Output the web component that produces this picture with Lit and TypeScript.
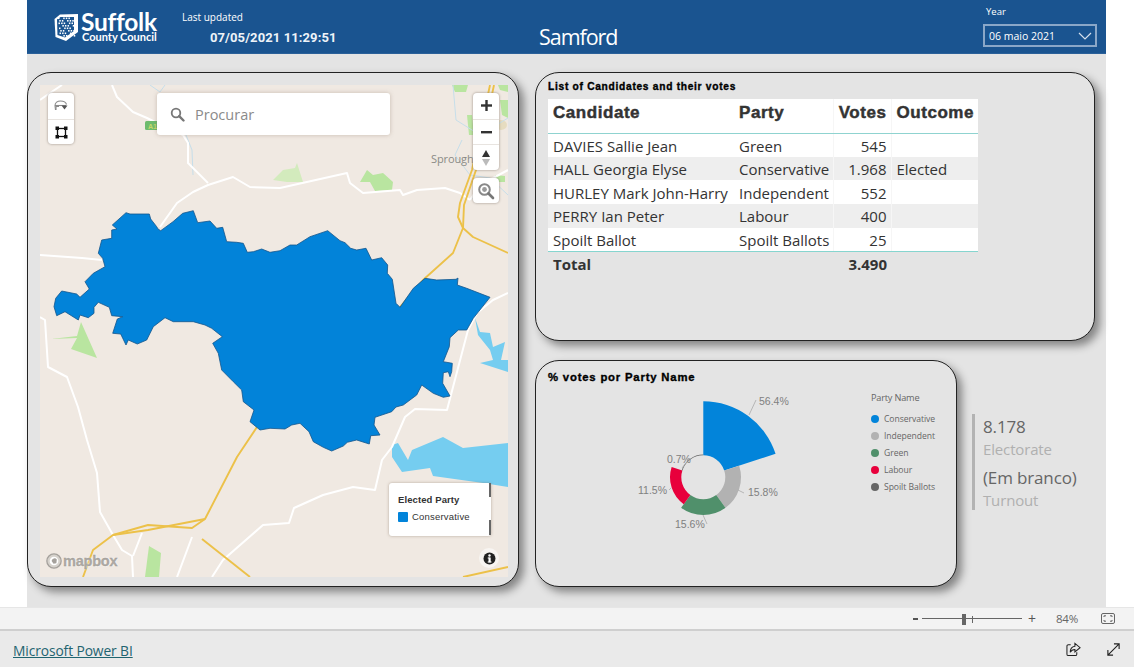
import { LitElement, html, css, svg } from "lit";
import { customElement } from "lit/decorators.js";

const REGION = "126,212.7 130,214 149.3,214 150.7,219 156.7,226.7 158,229 160.7,230.7 173,221.7 182.7,213.3 193.3,210.7 197.7,222.7 210,221 216.7,228.3 222.7,227.3 226.7,241.7 236.7,242.3 243.3,243.3 247.3,252.3 253.3,251.7 261.7,249 270,252.3 280,250.7 290,245 296.7,245 310,236.7 327.7,230.7 340,240.7 345,242.7 350.7,248.3 356.7,250 366,248.3 371.7,260 381.7,257.7 387.7,265 387.3,273.3 392.3,279.3 396,303.3 400,307.3 413.3,288.3 425,278.3 436.7,280 456,279.3 458,278 457.3,285 466.7,288.3 490,297.3 473.3,318.3 466.7,330 458.3,330 450,337.7 449.3,346.7 443.3,361.7 452.3,363.3 451.7,371.7 450,376.7 448.3,371.7 443.3,372.7 442.7,383.3 450,396 443.3,397.3 433.3,393.3 421.7,385 416.7,395 403.3,405 396,407 391.7,411.7 375,417.3 374,425 380,435 370.7,435.7 369.3,444 356.7,440 347.3,442.3 343.3,446 331.7,451 323.3,447.3 313.3,441.7 309,431.7 300,423.3 291.7,425 285,429 270,428.3 260,430 250,421.7 254,410 243.3,401.7 241.7,390 233.3,381.7 221.7,370 218.3,353.3 212.7,343.3 222.3,336.7 211.7,328.3 205,325 193.3,321.7 173.3,321.7 165,317.7 153.3,326.7 146.7,340 137.3,344 128.3,340 126,345 120.7,334 112.7,333.3 117.3,319 122.7,316.7 111.7,315.7 109.3,307.3 98.3,302.3 94,307.3 94,313.3 88.3,317.7 80,315 78.3,320 65,311.7 56.7,315.7 54,306.7 55.7,298.3 61.7,291 76.7,294 80,297.3 89.3,289 85,281.7 93.3,273.3 105,266.7 102.7,258.3 98.3,253.3 101.7,240 111.7,238.3 111.7,230 117,229 112.3,225";

const WHITE_ROADS = [
  "112,85 117,97 133,112 147,118 157,123 183,135 188,143 188,163 208,183",
  "160,227 177,203 193,192 208,185 233,177 250,187 280,188 347,173 350,183 363,193 400,190 403,195 417,190 445,188 460,193 470,200",
  "40,255 82,258 102,260",
  "40,317 45,320 48,367 67,377 78,407 87,440 97,473 100,512 113,535 122,550 132,556 133,577",
  "142,533 133,556",
  "192,537 177,577",
  "212,577 223,560 263,525 289,523 294,508 323,495 353,487 375,490 382,460 392,447 405,417 415,409 447,410 468,330 477,313 493,300 508,293",
  "40,100 50,93 62,85",
  "470,200 480,185 508,170",
];
const YELLOW_ROADS = [
  "257,427 237,457 205,519 192,528 148,525 113,535 93,550 83,577",
  "205,519 148,530 113,535",
  "202,539 250,577",
  "463,577 508,567",
  "400,307 423,280 453,253 463,228 458,217 460,203 472,170 490,85",
  "463,228 473,237 508,253",
  "463,228 464,205 476,170 494,85",
];
const STREAMS = [
  "186,135 192,150 193,175",
  "150,85 160,92 165,85",
  "453,85 456,120 480,135 508,118",
  "462,140 455,155 470,175 490,178 508,195",
  "470,200 480,192",
];
const WATER = [
  "475,318 480,332 490,333 493,347 505,342 501,360 508,360 508,372 480,363 493,360 490,350 478,335",
  "392,457 392,445 398,443 408,460 412,450 443,437 463,448 508,443 508,487 483,483 433,476 430,468 402,472",
];
const PARKS_LIGHT = [
  "273,180 283,170 295,168 297,163 303,182 287,182",
];
const PARKS = [
  "81,322 97,358 71,349 77,338 51,339 77,336",
  "149,546 161,553 159,577 145,577",
  "360,182 367,170 373,175 383,173 393,182 392,190 375,191 370,182",
  "452,85 468,85 466,92 455,92",
  "467,115 472,115 474,135 469,135",
  "495,175 505,176 505,182 497,182",
  "500,100 508,100 508,118 502,115",
  "498,85 508,85 508,92 500,90",
];

const CX = 703.3;
const CY = 477.3;
const R0 = 22;
function wedge(a0: number, a1: number, r: number) {
  const p = (a: number, rr: number) => {
    const t = (a * Math.PI) / 180;
    return `${(CX + rr * Math.sin(t)).toFixed(2)} ${(CY - rr * Math.cos(t)).toFixed(2)}`;
  };
  return `M${p(a0, R0)} L${p(a0, r)} A${r} ${r} 0 0 1 ${p(a1, r)} L${p(a1, R0)} A${R0} ${R0} 0 0 0 ${p(a0, R0)} Z`;
}
const SLICES = [
  { a0: 0, a1: 72, r: 76, c: "#0284da" },
  { a0: 72, a1: 144, r: 37.7, c: "#b2b2b2" },
  { a0: 144, a1: 216, r: 37.7, c: "#50906b" },
  { a0: 216, a1: 288, r: 33.3, c: "#e8003c" },
  { a0: 288, a1: 360, r: 22.7, c: "#666666" },
];
const LABELS = [
  { t: "56.4%", x: 759, y: 405, l: "749,415 756,400" },
  { t: "15.8%", x: 748, y: 496, l: "738,490 744,493" },
  { t: "15.6%", x: 675, y: 528, l: "703,515 707,524" },
  { t: "11.5%", x: 638, y: 494, l: "669,490 671,488" },
  { t: "0.7%", x: 667, y: 463, l: "682,468 689,459" },
];
const LEGEND = [
  ["Conservative", "#0284da"],
  ["Independent", "#b2b2b2"],
  ["Green", "#50906b"],
  ["Labour", "#e8003c"],
  ["Spoilt Ballots", "#666666"],
];
const ROWS = [
  ["DAVIES Sallie Jean", "Green", "545", ""],
  ["HALL Georgia Elyse", "Conservative", "1.968", "Elected"],
  ["HURLEY Mark John-Harry", "Independent", "552", ""],
  ["PERRY Ian Peter", "Labour", "400", ""],
  ["Spoilt Ballot", "Spoilt Ballots", "25", ""],
];

// speckle positions for the crest in the logo
const SPECKS: [number, number][] = [];
for (let y = 0; y < 8; y++) {
  for (let x = 0; x < 6; x++) {
    if ((x * 3 + y * 5) % 4 !== 3) SPECKS.push([58 + x * 2.6 + (y % 2) + y * 0.25, 17.5 + y * 2.5]);
  }
}

@customElement("app-root")
export class AppRoot extends LitElement {
  static styles = css`
    :host { display: block; height: 667px; background: #fff; overflow: hidden; font-family: "Open Sans", "Noto Sans", sans-serif; }
    .canvas { margin-left: 27px; width: 1079px; height: 607px; background: #e4e4e4; display: flex; flex-direction: column; }
    .hdr { height: 54px; flex: none; background: #1a5490; border-bottom: 1px solid #2a6099; box-sizing: border-box; color: #fff; display: flex; position: relative; }
    .logo { width: 27px; height: 30px; margin: 12px 0 0 27px; flex: none; }
    .brand { margin: 11px 0 0 0; width: 101px; flex: none; font-family: Lato, sans-serif; }
    .brand b { display: block; font-size: 24.5px; line-height: 22px; font-weight: 700; letter-spacing: -0.25px; }
    .brand span { display: block; font-size: 11px; line-height: 8px; font-weight: 700; margin-left: 1px; white-space: nowrap; }
    .upd { flex: none; width: 280px; }
    .upd small { display: block; font-size: 10px; line-height: 14px; margin-top: 10px; }
    .upd strong { display: block; font-family: Roboto, sans-serif; font-size: 13px; line-height: 16px; font-weight: 700; letter-spacing: 0.1px; margin: 6px 0 0 28px; color: #eef3f8; white-space: nowrap; }
    .ttl { flex: none; width: 78px; margin: 22px 0 0 77px; font-size: 21.5px; line-height: 30px; letter-spacing: -1.05px; white-space: nowrap; }
    .year { margin-left: 366px; flex: none; width: 114px; }
    .year small { display: block; font-size: 9.5px; line-height: 12px; margin: 6px 0 0 3px; }
    .sel { margin-top: 6px; height: 23px; box-sizing: border-box; border: 2px solid #8aa7c8; display: flex; align-items: center; justify-content: space-between; padding: 0 3px 0 4px; font-size: 10.5px; }
    .sel svg { display: block; }

    .main { display: grid; grid-template-columns: 492px 560px; column-gap: 16px; padding-top: 18px; }
    .card { background: #e4e4e4; border: 1px solid #222; border-radius: 24px; box-sizing: border-box; box-shadow: 5px 5px 8px rgba(0,0,0,.42); }
    .mapcard { height: 515px; padding: 12px 10px 9px 12px; }
    .map { width: 468px; height: 492px; position: relative; overflow: hidden; background: #f0e9e2; }
    .map > svg.base { display: block; }
    .ctl { position: absolute; background: #fff; border-radius: 4px; box-shadow: 0 0 2px 1px rgba(120,110,100,.35); display: flex; flex-direction: column; }
    .ctl div { height: 25.7px; display: flex; align-items: center; justify-content: center; box-sizing: border-box; }
    .ctl div + div { border-top: 1px solid #e8e4e0; }
    .c1 { left: 8px; top: 8px; width: 26px; }
    .c2 { left: 433px; top: 8px; width: 26px; }
    .c3 { left: 433px; top: 93px; width: 26px; height: 25px; align-items: center; justify-content: center; }
    .search { position: absolute; left: 117px; top: 8px; width: 233px; height: 42px; background: #fff; border-radius: 3px; box-shadow: 0 0 4px rgba(120,100,80,.35); display: flex; align-items: center; color: #8a8a8a; font-size: 14.5px; padding-left: 13px; box-sizing: border-box; gap: 10px; }
    .legend { position: absolute; left: 349px; top: 398px; width: 102px; height: 53px; background: #fff; border-radius: 3px; box-shadow: 0 0 3px rgba(120,100,80,.5); box-sizing: border-box; padding: 11px 0 0 9px; font-family: "Liberation Sans", sans-serif; color: #333; }
    .legend b { display: block; font-size: 9.5px; line-height: 12px; letter-spacing: 0.1px; }
    .legend div.r { display: flex; align-items: center; font-size: 9.5px; gap: 4px; margin-top: 5px; letter-spacing: 0.2px; }
    .legend i { width: 10px; height: 10px; background: #0284da; border-radius: 1px; }
    .legend u { position: absolute; left: 100px; width: 2px; background: #666; }
    .u1 { top: 0; height: 14px; }
    .u2 { top: 37px; height: 15px; }
    .mapbox { position: absolute; left: 6px; top: 468px; display: flex; align-items: center; gap: 1px; font: 700 14.5px "Liberation Sans", sans-serif; color: #aeaaa4; letter-spacing: -0.2px; -webkit-text-stroke: 0.3px #9c9892; text-shadow: 0 0 1px #fff, 0 0 2px #fff; }
    .info { position: absolute; left: 439px; top: 463px; width: 20px; height: 20px; border-radius: 50%; background: rgba(255,255,255,.55); display: flex; align-items: center; justify-content: center; }

    .right { display: flex; flex-direction: column; gap: 19px; }
    .tcard { height: 269px; padding: 8px 12px 0; }
    .h { font-family: "Liberation Sans", sans-serif; font-weight: 700; color: #000; -webkit-text-stroke: 0.35px #000; white-space: nowrap; }
    .tcard .h { font-size: 10.2px; line-height: 12px; letter-spacing: 0.72px; margin-bottom: 6px; }
    table { border-collapse: collapse; table-layout: fixed; width: 430px; color: #333; font-size: 15px; }
    th { background: #fff; height: 34px; box-sizing: border-box; padding: 2px 4px 8px 5px; text-align: left; font-family: "Liberation Sans", sans-serif; font-size: 17px; font-weight: 700; -webkit-text-stroke: 0.45px #333; letter-spacing: 0.55px; border-bottom: 1px solid #8fd3d0; white-space: nowrap; }
    td { height: 23.7px; padding: 1px 4px 0 5px; white-space: nowrap; box-sizing: border-box; line-height: 18px; }
    tbody tr:nth-child(odd) td { background: #fff; }
    tbody tr:nth-child(even) td { background: #eee; }
    th.n, td.n { text-align: right; }
    td.s, th.s { border-right: 1px solid #f6f6f6; }
    tbody tr:last-child td { border-bottom: 1px solid #86d5cf; }
    tfoot td { font-weight: 700; }
    .low { display: flex; gap: 15px; }
    .dcard { width: 422px; height: 227px; padding: 9px 12px 0; }
    .dcard .h { font-size: 11.3px; line-height: 14px; letter-spacing: 0.82px; }
    .dbody { display: flex; margin-top: 5px; }
    .dbody svg { flex: none; display: block; }
    .lg { margin: 2px 0 0 3px; color: #666; font-size: 8.6px; }
    .lg h4 { margin: 0 0 7px; font-size: 9.2px; font-weight: 400; line-height: 13px; letter-spacing: -0.2px; }
    .lg div { display: flex; align-items: center; gap: 5px; height: 16.8px; white-space: nowrap; letter-spacing: -0.05px; }
    .lg i { width: 8px; height: 8px; border-radius: 50%; flex: none; margin-left: 0; }
    .kpi { margin-top: 54px; height: 96px; border-left: 3px solid #b3b3b3; padding: 1px 0 0 8px; box-sizing: border-box; letter-spacing: -0.15px; }
    .kpi p { margin: 0; white-space: nowrap; }
    .v { font-size: 17px; line-height: 23px; color: #666; }
    .k { font-size: 15px; line-height: 22px; color: #b0b0b0; }
    .kpi .v2 { margin-top: 6px; }

    .bar { height: 24px; background: #f3f3f3; border-top: 1px solid #e6e6e6; border-bottom: 2px solid #cfcfcf; box-sizing: border-box; display: flex; align-items: center; justify-content: flex-end; color: #666; font-size: 11px; }
    .minus { width: 5px; height: 2px; background: #555; margin-right: 4px; }
    .slider { width: 100px; height: 12px; margin-right: 6px; position: relative; display: flex; align-items: center; }
    .slider::before { content: ""; display: block; width: 100%; height: 1px; background: #666; }
    .thumb { position: absolute; left: 40px; top: 1px; width: 4px; height: 11px; background: #666; }
    .tick { position: absolute; left: 50px; top: 3px; width: 1px; height: 7px; background: #666; }
    .pct { margin: 0 23px 0 20px; font-size: 11.5px; letter-spacing: -0.2px; }
    .plus { font-size: 14px; line-height: 14px; color: #555; }
    .fit { margin-right: 19px; display: block; }
    .foot { height: 36px; padding: 1px 13px 0; background: #eaeaea; display: flex; align-items: center; justify-content: space-between; }
    .foot a { color: #1f6470; text-decoration: underline; font-size: 13.8px; letter-spacing: -0.1px; }
    .foot span { display: flex; gap: 25px; align-items: center; margin-top: -2px; }
  `;

  private map() {
    return html`<svg class="base" width="468" height="492" viewBox="40 85 468 492">
      ${PARKS_LIGHT.map((p) => svg`<polygon points=${p} fill="#d3ebbd"></polygon>`)}
      ${PARKS.map((p) => svg`<polygon points=${p} fill="#b9e5a0"></polygon>`)}
      <ellipse cx="501" cy="125" rx="6" ry="5" fill="#e6dcc0"></ellipse>
      ${WATER.map((p) => svg`<polygon points=${p} fill="#75cdf0"></polygon>`)}
      ${STREAMS.map((p) => svg`<polyline points=${p} fill="none" stroke="#c6deea" stroke-width="1"></polyline>`)}
      ${WHITE_ROADS.map((p) => svg`<polyline points=${p} fill="none" stroke="#fff" stroke-width="2" stroke-linejoin="round"></polyline>`)}
      ${YELLOW_ROADS.map((p) => svg`<polyline points=${p} fill="none" stroke="#ecc149" stroke-width="1.900" stroke-linejoin="round"></polyline>`)}
      <rect x="145" y="121" width="14" height="9" rx="1.5" fill="#6dbb6d"></rect>
      <text x="148" y="129" font-family="Liberation Sans" font-size="7" font-weight="700" fill="#c8d86a">A1</text>
      <text x="431" y="163" font-family="Open Sans" font-size="11" fill="#8b8b86" letter-spacing="-0.1">Sproughton</text>
      <polygon points=${REGION} fill="#0283d9" stroke="#14558c" stroke-width="0.8" stroke-linejoin="round"></polygon>
    </svg>
    <div class="ctl c1">
      <div><svg width="16" height="14" viewBox="0 0 16 14" fill="none" stroke="#8a8a8a" stroke-width="1.1"><path d="M2.5 11 2 6.5C2 3.5 4.5 2 7.5 2s5.5 1.5 6 3.500"></path><path d="M2 6.500h11"></path><path d="M8.500 6.500h6l-3 4z" fill="#555" stroke="none"></path><path d="M3 11V7.500h3"></path></svg></div>
      <div><svg width="13" height="13" viewBox="0 0 13 13" fill="none" stroke="#111"><rect x="2.500" y="2.500" width="8" height="8" stroke-width="1.300"></rect><g fill="#111" stroke="none"><rect x="0.500" y="0.500" width="3.500" height="3.500"></rect><rect x="9" y="0.500" width="3.500" height="3.500"></rect><rect x="0.500" y="9" width="3.500" height="3.500"></rect><rect x="9" y="9" width="3.500" height="3.500"></rect></g></svg></div>
    </div>
    <div class="ctl c2">
      <div><svg width="13" height="13" viewBox="0 0 13 13" fill="#333"><rect x="5.300" y="1" width="2.400" height="11"></rect><rect x="1" y="5.300" width="11" height="2.400"></rect></svg></div>
      <div><svg width="11" height="3" viewBox="0 0 11 3" fill="#333"><rect width="11" height="2.400"></rect></svg></div>
      <div><svg width="10" height="18" viewBox="0 0 10 18"><path d="M5 1 9 8H1z" fill="#333"></path><path d="M5 17 9 10H1z" fill="#bbb"></path></svg></div>
    </div>
    <div class="ctl c3">
      <svg width="18" height="18" viewBox="0 0 18 18" fill="none"><circle cx="7.500" cy="7.500" r="5.300" stroke="#888" stroke-width="2"></circle><circle cx="7.500" cy="7.500" r="2.400" fill="#999"></circle><path d="M11.500 11.500 16 16" stroke="#777" stroke-width="2.600" stroke-linecap="round"></path></svg>
    </div>
    <div class="search">
      <svg width="15" height="15" viewBox="0 0 15 15" fill="none" stroke="#777"><circle cx="6" cy="6" r="4.300" stroke-width="1.800"></circle><path d="M9.200 9.200 13.500 13.500" stroke-width="2.400" stroke-linecap="round"></path></svg>
      <span>Procurar</span>
    </div>
    <div class="legend"><b>Elected Party</b><div class="r"><i></i>Conservative</div><u class="u1"></u><u class="u2"></u></div>
    <div class="mapbox">
      <svg width="16" height="16" viewBox="0 0 17 17"><circle cx="8.500" cy="8.500" r="7.600" fill="#d6d2cc" stroke="#a5a19c" stroke-width="1.400"></circle><circle cx="8.500" cy="8.500" r="4.600" fill="#fff"></circle><path d="M6 8.500a3 3 0 0 1 5.500-1.500L11 11l-3 .5z" fill="#a5a19c"></path></svg>
      <span>mapbox</span>
    </div>
    <div class="info"><svg width="13" height="13" viewBox="0 0 13 13"><circle cx="6.500" cy="6.500" r="6" fill="#222"></circle><rect x="5.500" y="5.500" width="2.200" height="4.800" fill="#fff"></rect><rect x="4.700" y="5.500" width="2" height="1" fill="#fff"></rect><rect x="4.700" y="9.500" width="3.800" height="1" fill="#fff"></rect><circle cx="6.500" cy="3.500" r="1.200" fill="#fff"></circle></svg></div>`;
  }

  render() {
    return html`
      <div class="canvas">
        <header class="hdr">
          <svg class="logo" viewBox="54 12 27 30">
            <path d="M54.500 19 60 14.500 78 14V32L66 41 55.500 37z" fill="#fff"></path>
            <path d="M57 19.500 60.500 17H74V31L65 37.500 57.500 35z" fill="#1a5490"></path>
            ${SPECKS.map(([x, y]) => svg`<rect x=${x} y=${y} width="1.500" height="1.600" fill="#fff"></rect>`)}
          </svg>
          <div class="brand"><b>Suffolk</b><span>County Council</span></div>
          <div class="upd"><small>Last updated</small><strong>07/05/2021 11:29:51</strong></div>
          <div class="ttl">Samford</div>
          <div class="year">
            <small>Year</small>
            <div class="sel"><span>06 maio 2021</span><svg width="14" height="8" viewBox="0 0 14 8" fill="none" stroke="#d5e0ec" stroke-width="1.200"><path d="M1 1 7 7l6-6"></path></svg></div>
          </div>
        </header>
        <div class="main">
          <section class="card mapcard"><div class="map">${this.map()}</div></section>
          <div class="right">
            <section class="card tcard">
              <div class="h">List of Candidates and their votes</div>
              <table>
                <colgroup><col style="width:186px" /><col style="width:99px" /><col style="width:58px" /><col style="width:87px" /></colgroup>
                <thead><tr><th>Candidate</th><th class="s">Party</th><th class="n s">Votes</th><th>Outcome</th></tr></thead>
                <tbody>
                  ${ROWS.map((r) => html`<tr><td>${r[0]}</td><td class="s">${r[1]}</td><td class="n s">${r[2]}</td><td>${r[3]}</td></tr>`)}
                </tbody>
                <tfoot><tr><td>Total</td><td></td><td class="n">3.490</td><td></td></tr></tfoot>
              </table>
            </section>
            <div class="low">
              <section class="card dcard">
                <div class="h">% votes por Party Name</div>
                <div class="dbody">
                  <svg width="320" height="190" viewBox="548 389 320 190">
                    ${SLICES.map((s) => svg`<path d=${wedge(s.a0, s.a1, s.r)} fill=${s.c}></path>`)}
                    ${LABELS.map((l) => svg`<polyline points=${l.l} fill="none" stroke="#aaa" stroke-width="0.8"></polyline><text x=${l.x} y=${l.y} font-family="Liberation Sans" font-size="10.500" fill="#808080">${l.t}</text>`)}
                  </svg>
                  <div class="lg">
                    <h4>Party Name</h4>
                    ${LEGEND.map(([n, c]) => html`<div><i style="background:${c}"></i>${n}</div>`)}
                  </div>
                </div>
              </section>
              <div class="kpi">
                <p class="v">8.178</p><p class="k">Electorate</p>
                <p class="v v2">(Em branco)</p><p class="k">Turnout</p>
              </div>
            </div>
          </div>
        </div>
      </div>
      <div class="bar">
        <div class="minus"></div>
        <div class="slider"><div class="thumb"></div><div class="tick"></div></div>
        <div class="plus">+</div>
        <div class="pct">84%</div>
        <svg class="fit" width="14" height="11" viewBox="0 0 14 11" fill="none" stroke="#666"><rect x="0.500" y="0.500" width="13" height="10" rx="1.500"></rect><path d="M3 4V2.800h2M9 2.800h2V4M3 7v1.200h2M9 8.200h2V7"></path></svg>
      </div>
      <div class="foot">
        <a href="#">Microsoft Power BI</a>
        <span>
          <svg width="15" height="15" viewBox="0 0 16 16" fill="none" stroke="#222" stroke-width="1.100"><path d="M5 3H2.500A1.500 1.500 0 0 0 1 4.500V13a1.500 1.500 0 0 0 1.500 1.500H10A1.500 1.500 0 0 0 11.500 13v-2"></path><path d="M9.500 1.500 15 6l-5.500 4.500V8C7 8 5.500 9 4.500 11c0-4 2-6 5-6.500z"></path></svg>
          <svg width="15" height="15" viewBox="0 0 16 16" fill="none" stroke="#222" stroke-width="1.200"><path d="M2 14 14 2M8.500 2H14V7.500M2 8.500V14H7.500"></path></svg>
        </span>
      </div>
    `;
  }
}
